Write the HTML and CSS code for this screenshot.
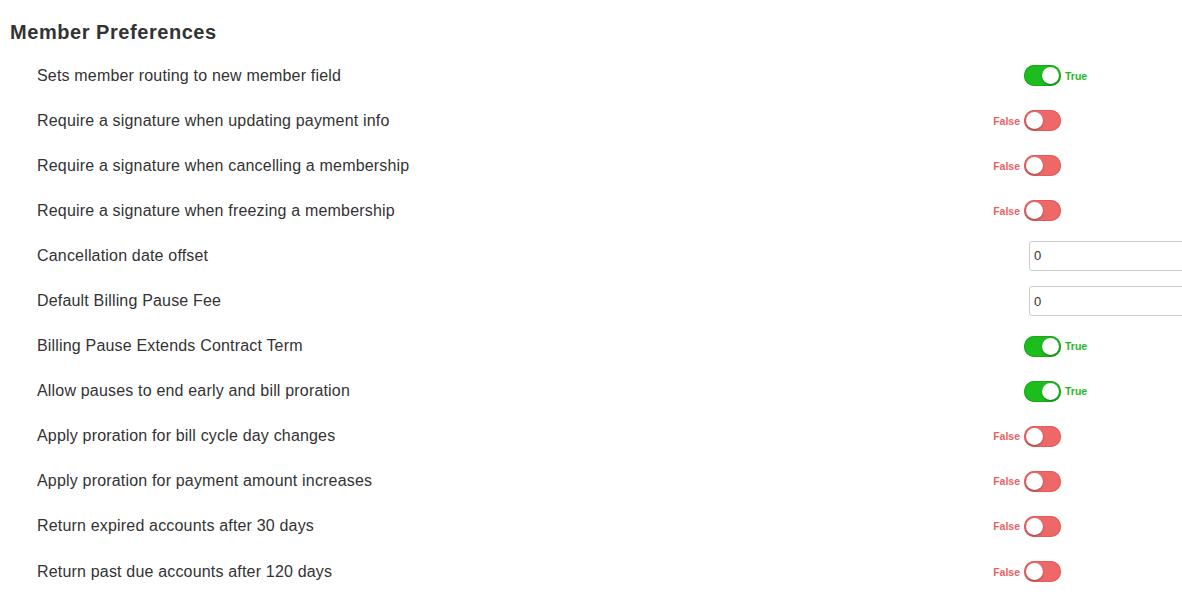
FILE: index.html
```html
<!DOCTYPE html>
<html lang="en">
<head>
    <meta charset="UTF-8" />
    <meta name="viewport" content="width=device-width, initial-scale=1.0"/>
    <title>Member Preferences</title>
    <link rel="stylesheet" href="styles.css">
</head>
<body>
<div class="page">
    <h2 class="section-title">Member Preferences</h2>

    <div class="pref-list">
        <div class="pref-row">
            <span class="pref-label">Sets member routing to new member field</span>
            <span class="toggle on"><span class="knob"></span></span>
            <span class="state state-true">True</span>
        </div>
        <div class="pref-row">
            <span class="pref-label">Require a signature when updating payment info</span>
            <span class="state state-false">False</span>
            <span class="toggle off"><span class="knob"></span></span>
        </div>
        <div class="pref-row">
            <span class="pref-label">Require a signature when cancelling a membership</span>
            <span class="state state-false">False</span>
            <span class="toggle off"><span class="knob"></span></span>
        </div>
        <div class="pref-row">
            <span class="pref-label">Require a signature when freezing a membership</span>
            <span class="state state-false">False</span>
            <span class="toggle off"><span class="knob"></span></span>
        </div>
        <div class="pref-row">
            <span class="pref-label">Cancellation date offset</span>
            <input class="pref-input" type="text" value="0" />
        </div>
        <div class="pref-row">
            <span class="pref-label">Default Billing Pause Fee</span>
            <input class="pref-input" type="text" value="0" />
        </div>
        <div class="pref-row">
            <span class="pref-label">Billing Pause Extends Contract Term</span>
            <span class="toggle on"><span class="knob"></span></span>
            <span class="state state-true">True</span>
        </div>
        <div class="pref-row">
            <span class="pref-label">Allow pauses to end early and bill proration</span>
            <span class="toggle on"><span class="knob"></span></span>
            <span class="state state-true">True</span>
        </div>
        <div class="pref-row">
            <span class="pref-label">Apply proration for bill cycle day changes</span>
            <span class="state state-false">False</span>
            <span class="toggle off"><span class="knob"></span></span>
        </div>
        <div class="pref-row">
            <span class="pref-label">Apply proration for payment amount increases</span>
            <span class="state state-false">False</span>
            <span class="toggle off"><span class="knob"></span></span>
        </div>
        <div class="pref-row">
            <span class="pref-label">Return expired accounts after 30 days</span>
            <span class="state state-false">False</span>
            <span class="toggle off"><span class="knob"></span></span>
        </div>
        <div class="pref-row">
            <span class="pref-label">Return past due accounts after 120 days</span>
            <span class="state state-false">False</span>
            <span class="toggle off"><span class="knob"></span></span>
        </div>
    </div>
</div>
</body>
</html>
```

FILE: styles.css
```css
body {
    margin: 0;
    font-family: "Liberation Sans", Arial, sans-serif;
    background: #ffffff;
    color: #333333;
    overflow: hidden;
}

.page {
    padding: 20px 0 0 10px;
}

.section-title {
    margin: 0 0 9px 0;
    font-size: 20px;
    line-height: 24px;
    font-weight: 600;
    letter-spacing: 0.55px;
    color: #333333;
}

.pref-list {
    padding-left: 27px;
}

.pref-row {
    display: grid;
    grid-template-columns: 1fr 37px 37px 121px;
    align-items: center;
    height: 45.1px;
}

.pref-label {
    grid-column: 1;
    font-size: 16px;
    letter-spacing: 0.18px;
    color: #333333;
}

.state {
    font-size: 10.5px;
    font-weight: bold;
}

.state-false {
    grid-column: 2;
    justify-self: end;
    margin-right: 4px;
    color: #ea6262;
}

.state-true {
    grid-column: 4;
    margin-left: 4px;
    color: #1fb81f;
}

.toggle {
    grid-column: 3;
    position: relative;
    width: 37px;
    height: 21px;
    border-radius: 11px;
    box-sizing: border-box;
}

.toggle.on {
    background: #1dbd1d;
    box-shadow: inset 0 0 0 1px #18a818;
}

.toggle.off {
    background: #ee6868;
    box-shadow: inset 0 0 0 1px #e15c5c;
}

.knob {
    position: absolute;
    top: 2px;
    width: 17px;
    height: 17px;
    border-radius: 50%;
    background: #ffffff;
    box-shadow: 0 1px 2px rgba(0, 0, 0, 0.35);
}

.toggle.on .knob {
    right: 2px;
}

.toggle.off .knob {
    left: 2px;
}

.pref-input {
    grid-column: 3 / 5;
    margin-left: 5px;
    width: 200px;
    height: 30px;
    box-sizing: border-box;
    padding: 0 4px;
    border: 1px solid #cccccc;
    border-radius: 3px;
    font-family: "Liberation Sans", Arial, sans-serif;
    font-size: 13px;
    color: #333333;
}
```
